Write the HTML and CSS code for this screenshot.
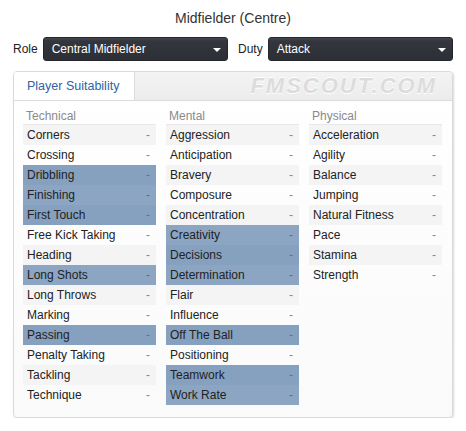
FILE: index.html
```html
<!DOCTYPE html>
<html>
<head>
<meta charset="utf-8">
<link rel="stylesheet" href="styles.css">
</head>
<body>
<div class="page">
  <h1 class="title">Midfielder (Centre)</h1>
  <div class="controls">
    <div class="field">
      <span class="label">Role</span>
      <div class="select"><span>Central Midfielder</span><span class="caret"></span></div>
    </div>
    <div class="field">
      <span class="label">Duty</span>
      <div class="select"><span>Attack</span><span class="caret"></span></div>
    </div>
  </div>
  <div class="panel">
    <div class="tabs">
      <div class="tab active">Player Suitability</div>
      <div class="watermark">FMSCOUT.COM</div>
    </div>
    <div class="cols">
      <div class="col">
        <div class="head">Technical</div>
        <div class="row"><span>Corners</span><span class="v">-</span></div>
        <div class="row"><span>Crossing</span><span class="v">-</span></div>
        <div class="row hl"><span>Dribbling</span><span class="v">-</span></div>
        <div class="row hl"><span>Finishing</span><span class="v">-</span></div>
        <div class="row hl"><span>First Touch</span><span class="v">-</span></div>
        <div class="row"><span>Free Kick Taking</span><span class="v">-</span></div>
        <div class="row"><span>Heading</span><span class="v">-</span></div>
        <div class="row hl"><span>Long Shots</span><span class="v">-</span></div>
        <div class="row"><span>Long Throws</span><span class="v">-</span></div>
        <div class="row"><span>Marking</span><span class="v">-</span></div>
        <div class="row hl"><span>Passing</span><span class="v">-</span></div>
        <div class="row"><span>Penalty Taking</span><span class="v">-</span></div>
        <div class="row"><span>Tackling</span><span class="v">-</span></div>
        <div class="row"><span>Technique</span><span class="v">-</span></div>
      </div>
      <div class="col">
        <div class="head">Mental</div>
        <div class="row"><span>Aggression</span><span class="v">-</span></div>
        <div class="row"><span>Anticipation</span><span class="v">-</span></div>
        <div class="row"><span>Bravery</span><span class="v">-</span></div>
        <div class="row"><span>Composure</span><span class="v">-</span></div>
        <div class="row"><span>Concentration</span><span class="v">-</span></div>
        <div class="row hl"><span>Creativity</span><span class="v">-</span></div>
        <div class="row hl"><span>Decisions</span><span class="v">-</span></div>
        <div class="row hl"><span>Determination</span><span class="v">-</span></div>
        <div class="row"><span>Flair</span><span class="v">-</span></div>
        <div class="row"><span>Influence</span><span class="v">-</span></div>
        <div class="row hl"><span>Off The Ball</span><span class="v">-</span></div>
        <div class="row"><span>Positioning</span><span class="v">-</span></div>
        <div class="row hl"><span>Teamwork</span><span class="v">-</span></div>
        <div class="row hl"><span>Work Rate</span><span class="v">-</span></div>
      </div>
      <div class="col">
        <div class="head">Physical</div>
        <div class="row"><span>Acceleration</span><span class="v">-</span></div>
        <div class="row"><span>Agility</span><span class="v">-</span></div>
        <div class="row"><span>Balance</span><span class="v">-</span></div>
        <div class="row"><span>Jumping</span><span class="v">-</span></div>
        <div class="row"><span>Natural Fitness</span><span class="v">-</span></div>
        <div class="row"><span>Pace</span><span class="v">-</span></div>
        <div class="row"><span>Stamina</span><span class="v">-</span></div>
        <div class="row"><span>Strength</span><span class="v">-</span></div>
      </div>
    </div>
  </div>
</div>
</body>
</html>
```

FILE: styles.css
```css
html, body {
  margin: 0;
  padding: 0;
  background: #ffffff;
}
body {
  font-family: "Liberation Sans", Arial, sans-serif;
  color: #222;
}
.page {
  width: 466px;
  padding: 10px 13px 0 13px;
  box-sizing: border-box;
}
.title {
  margin: 0;
  font-size: 14px;
  font-weight: normal;
  color: #333;
  text-align: center;
  line-height: 16px;
}
.controls {
  display: flex;
  gap: 10px;
  margin-top: 11px;
}
.field {
  flex: 1;
  display: flex;
  align-items: center;
  gap: 5px;
}
.label {
  font-size: 12px;
  color: #222;
}
.select {
  flex: 1;
  height: 24px;
  box-sizing: border-box;
  border-radius: 3px;
  background: linear-gradient(#43464c 0, #3a3d43 2px, #33363c 3px, #2c2f35 100%);
  border: 1px solid #25272c;
  color: #fff;
  font-size: 12px;
  display: flex;
  align-items: center;
  justify-content: space-between;
  padding: 0 6px 0 8px;
}
.caret {
  width: 0;
  height: 0;
  border-left: 4px solid transparent;
  border-right: 4px solid transparent;
  border-top: 4px solid #fff;
  margin-top: 1px;
}
.panel {
  margin-top: 10px;
  height: 347px;
  box-sizing: border-box;
  border: 1px solid #dadada;
  border-radius: 4px;
  background: linear-gradient(#ffffff, #fafafa);
  box-shadow: 1px 1px 2px rgba(0,0,0,0.15);
  overflow: hidden;
}
.tabs {
  height: 29px;
  box-sizing: border-box;
  background: linear-gradient(#f3f3f3, #ececec);
  border-bottom: 1px solid #dcdcdc;
  display: flex;
  align-items: stretch;
}
.tab {
  width: 121px;
  box-sizing: border-box;
  padding-left: 13px;
  display: flex;
  align-items: center;
  font-size: 12.5px;
  color: #2d62a6;
}
.tab.active {
  background: #fff;
  border-right: 1px solid #dcdcdc;
}
.watermark {
  flex: 1;
  display: flex;
  align-items: center;
  justify-content: flex-end;
  padding-right: 15px;
  font-size: 22px;
  font-weight: bold;
  font-style: italic;
  letter-spacing: 2px;
  color: #dcdcdc;
  text-shadow: 0 1px 0 #fff, 0 -1px 0 #fff;
}
.cols {
  display: grid;
  grid-template-columns: 1fr 1fr 1fr;
  column-gap: 10px;
  padding: 0 10px 0 9px;
  align-items: start;
}
.head {
  height: 24px;
  box-sizing: border-box;
  border-bottom: 1px solid #e8e8e8;
  font-size: 12px;
  color: #8a8a8a;
  padding: 9px 0 0 3px;
  line-height: 12px;
}
.row {
  height: 20px;
  display: flex;
  align-items: center;
  justify-content: space-between;
  padding: 0 6px 0 4px;
  font-size: 12px;
  color: #222;
}
.row:nth-child(even) {
  background: #f4f4f4;
}
.row.hl {
  background: #8ba5c3;
}
.row.hl:nth-child(even) {
  background: #86a0bf;
}
.v {
  color: #888;
}
.row.hl .v {
  color: #5d6f85;
}
```
